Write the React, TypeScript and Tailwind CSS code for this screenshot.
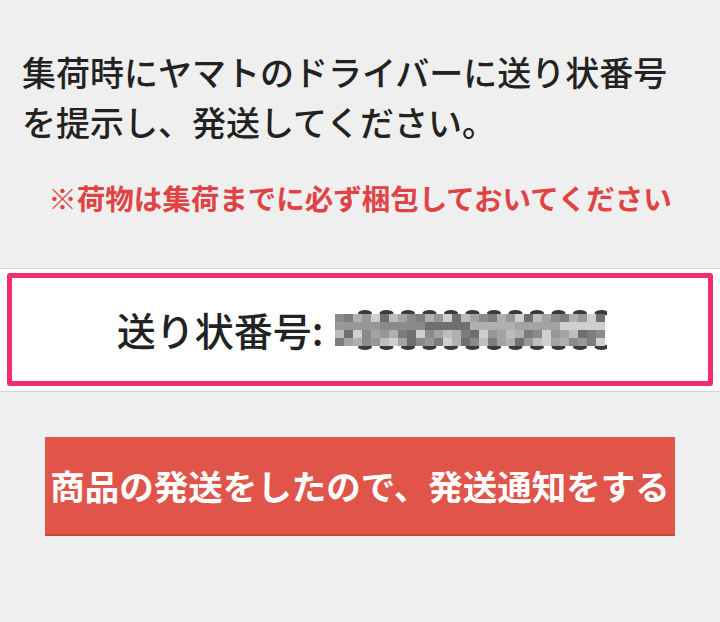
import React from 'react';

const FONT = '"Noto Sans CJK JP", "Noto Sans", sans-serif';

// pixel mosaic hiding the tracking number
const MOSAIC_COLS = 30;
const MOSAIC_ROWS = 4;
const shades = ['#8a8a8a', '#a3a3a3', '#bdbdbd', '#6f6f6f', '#cfcfcf', '#979797', '#b0b0b0', '#7d7d7d'];

function Mosaic() {
  const cells = [];
  for (let r = 0; r < MOSAIC_ROWS; r++) {
    for (let c = 0; c < MOSAIC_COLS; c++) {
      const i = (c * 7 + r * 13 + ((c * r) % 5)) % shades.length;
      cells.push(<rect key={`${r}-${c}`} x={2 + c * 9} y={4 + r * 8} width={9} height={8} fill={shades[i]} />);
    }
  }
  const dots = [];
  for (let k = 0; k < 12; k++) {
    dots.push(<ellipse key={`t${k}`} cx={32 + k * 21.5} cy={3} rx={7} ry={3} fill="#3a3a3a" />);
    dots.push(<ellipse key={`b${k}`} cx={32 + k * 21.5} cy={37} rx={7} ry={3} fill="#3a3a3a" />);
  }
  return (
    <svg width="274" height="40" viewBox="0 0 274 40" className="block blur-[0.6px]">
      {dots}
      {cells}
    </svg>
  );
}

export default function App() {
  return (
    <div className="w-[720px] h-[622px] bg-[#efefef] overflow-hidden" style={{ fontFamily: FONT }}>
      {/* INSTRUCTIONS */}
      <div className="px-[22px] pt-[47px]">
        <p className="text-[34px] leading-[50px] text-[#222] font-medium">
          集荷時にヤマトのドライバーに送り状番号を提示し、発送してください。
        </p>
        <p className="mt-[31px] text-center text-[28.5px] leading-[40px] font-bold text-[#e04343]">
          ※荷物は集荷までに必ず梱包しておいてください
        </p>
      </div>

      {/* TRACKING NUMBER */}
      <div className="mt-[50px] bg-white border-y border-[#d6d6d6] px-[7px] pt-[4px] pb-[5px]">
        <div className="h-[113px] border-[5px] border-[#f42d6c] rounded-[3px] flex items-center justify-center gap-[10px] pl-[4px]">
          <span className="text-[39px] font-medium text-[#222] leading-none">送り状番号:</span>
          <Mosaic />
        </div>
      </div>

      {/* NOTIFY BUTTON */}
      <div className="px-[45px] pt-[45px]">
        <button className="w-full h-[99px] bg-[#e0544a] border-b-2 border-[#c9463d] text-white text-[34.5px] font-bold flex items-center justify-center">
          商品の発送をしたので、発送通知をする
        </button>
      </div>
    </div>
  );
}
